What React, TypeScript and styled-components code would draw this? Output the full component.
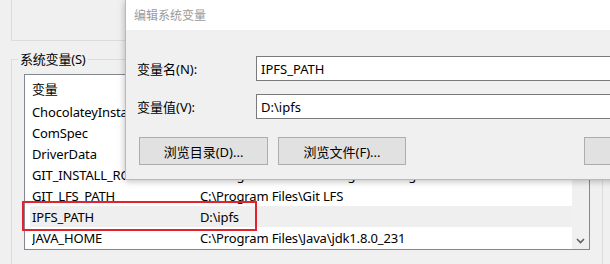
import React from "react";
import styled, { createGlobalStyle } from "styled-components";

const Global = createGlobalStyle`
  html, body { margin: 0; padding: 0; background: #f0f0f0; overflow: hidden; }
  * { box-sizing: border-box; }
`;

const FONT = `"Noto Sans", "Noto Sans CJK SC", sans-serif`;

const Screen = styled.div`
  position: relative;
  width: 610px;
  height: 264px;
  overflow: hidden;
  background: #f0f0f0;
  font-family: ${FONT};
  font-size: 13px;
  color: #000;
`;

const TopGroup = styled.div`
  margin-left: 11px;
  margin-top: -20px;
  width: 592px;
  height: 61px;
  border: 1px solid #dcdcdc;
`;

const Group = styled.fieldset`
  margin: 10px 0 0 11px;
  width: 592px;
  height: 240px;
  border: 1px solid #dcdcdc;
  padding: 0;
  min-width: 0;
`;

const Legend = styled.legend`
  margin-left: 6px;
  padding: 0 2px;
  font-size: 13px;
  line-height: 17px;
  letter-spacing: -0.2px;
`;

const ListBox = styled.div`
  margin: 6px 0 0 12px;
  width: 566px;
  height: 176px;
  border: 1px solid #828790;
  background: #fff;
  display: grid;
  grid-template-columns: minmax(0, 1fr) 17px;
`;

const ListBody = styled.div`
  display: flex;
  flex-direction: column;
  min-width: 0;
`;

const HeaderRow = styled.div`
  height: 26px;
  display: grid;
  grid-template-columns: 170px minmax(0, 1fr);
  align-items: center;
  padding-left: 7px;
`;

const Row = styled.div<{ $selected?: boolean }>`
  position: relative;
  height: 21px;
  margin-left: 5px;
  padding-left: 2px;
  display: grid;
  grid-template-columns: 168px minmax(0, 1fr);
  align-items: center;
  white-space: nowrap;
  background: ${(p) => (p.$selected ? "#efefef" : "transparent")};
`;

const Cell = styled.span`
  overflow: hidden;
  white-space: nowrap;
  letter-spacing: -0.15px;
`;

const Highlight = styled.div`
  position: absolute;
  left: -8px;
  top: -5px;
  width: 235px;
  height: 30px;
  border: 2px solid #e3222d;
  pointer-events: none;
`;

const ScrollBar = styled.div`
  background: #f0f0f0;
  display: flex;
  flex-direction: column;
  justify-content: flex-end;
  align-items: center;
  padding-bottom: 5px;
`;

const Dialog = styled.div`
  position: absolute;
  left: 125px;
  top: 0;
  width: 640px;
  height: 180px;
  background: #f0f0f0;
  border-left: 1px solid #b9b9b9;
  border-bottom: 1px solid #b9b9b9;
  box-shadow: 0 1px 7px rgba(0, 0, 0, 0.28);
  display: flex;
  flex-direction: column;
`;

const TitleBar = styled.div`
  height: 30px;
  background: #fff;
  display: flex;
  align-items: center;
  padding-left: 8px;
  color: #9a9a9a;
  font-size: 12px;
`;

const Form = styled.div`
  display: grid;
  grid-template-columns: 119px 1fr;
  row-gap: 13px;
  align-items: center;
  padding: 26px 0 0 11px;
`;

const Label = styled.label`
  font-size: 13px;
`;

const Input = styled.div`
  height: 25px;
  border: 1px solid #7a7a7a;
  background: #fff;
  display: flex;
  align-items: center;
  padding-left: 4px;
  font-size: 13px;
`;

const Buttons = styled.div`
  display: flex;
  gap: 10px;
  padding: 18px 0 0 13px;
`;

const Button = styled.button<{ $w: number; $ml?: number }>`
  flex: 0 0 auto;
  width: ${(p) => p.$w}px;
  height: 28px;
  margin-left: ${(p) => p.$ml ?? 0}px;
  background: #e1e1e1;
  border: 1px solid #adadad;
  font-family: ${FONT};
  font-size: 13px;
  color: #000;
  padding: 0;
`;

const rows: [string, string][] = [
  ["ChocolateyInstall", "C:\\ProgramData\\chocolatey"],
  ["ComSpec", "C:\\Windows\\system32\\cmd.exe"],
  ["DriverData", "C:\\Windows\\System32\\Drivers\\DriverData"],
  ["GIT_INSTALL_ROOT", "C:\\Program Files\\Git\\mingw64\\bin\\git.exe"],
  ["GIT_LFS_PATH", "C:\\Program Files\\Git LFS"],
  ["IPFS_PATH", "D:\\ipfs"],
  ["JAVA_HOME", "C:\\Program Files\\Java\\jdk1.8.0_231"],
];

export default function App() {
  return (
    <Screen>
      <Global />
      <TopGroup />
      <Group>
        <Legend>系统变量(S)</Legend>
        <ListBox>
          <ListBody>
            <HeaderRow>
              <Cell>变量</Cell>
              <Cell>值</Cell>
            </HeaderRow>
            {rows.map(([k, v]) => (
              <Row key={k} $selected={k === "IPFS_PATH"}>
                <Cell>{k}</Cell>
                <Cell>{v}</Cell>
                {k === "IPFS_PATH" && <Highlight />}
              </Row>
            ))}
          </ListBody>
          <ScrollBar>
            <svg width="9" height="6" viewBox="0 0 9 6">
              <path d="M1 1 L4.5 4.5 L8 1" fill="none" stroke="#606060" strokeWidth="1.6" />
            </svg>
          </ScrollBar>
        </ListBox>
      </Group>
      <Dialog>
        <TitleBar>编辑系统变量</TitleBar>
        <Form>
          <Label>变量名(N):</Label>
          <Input>IPFS_PATH</Input>
          <Label>变量值(V):</Label>
          <Input>D:\ipfs</Input>
        </Form>
        <Buttons>
          <Button $w={129}>浏览目录(D)...</Button>
          <Button $w={128}>浏览文件(F)...</Button>
          <Button $w={100} $ml={168}>确定</Button>
        </Buttons>
      </Dialog>
    </Screen>
  );
}
